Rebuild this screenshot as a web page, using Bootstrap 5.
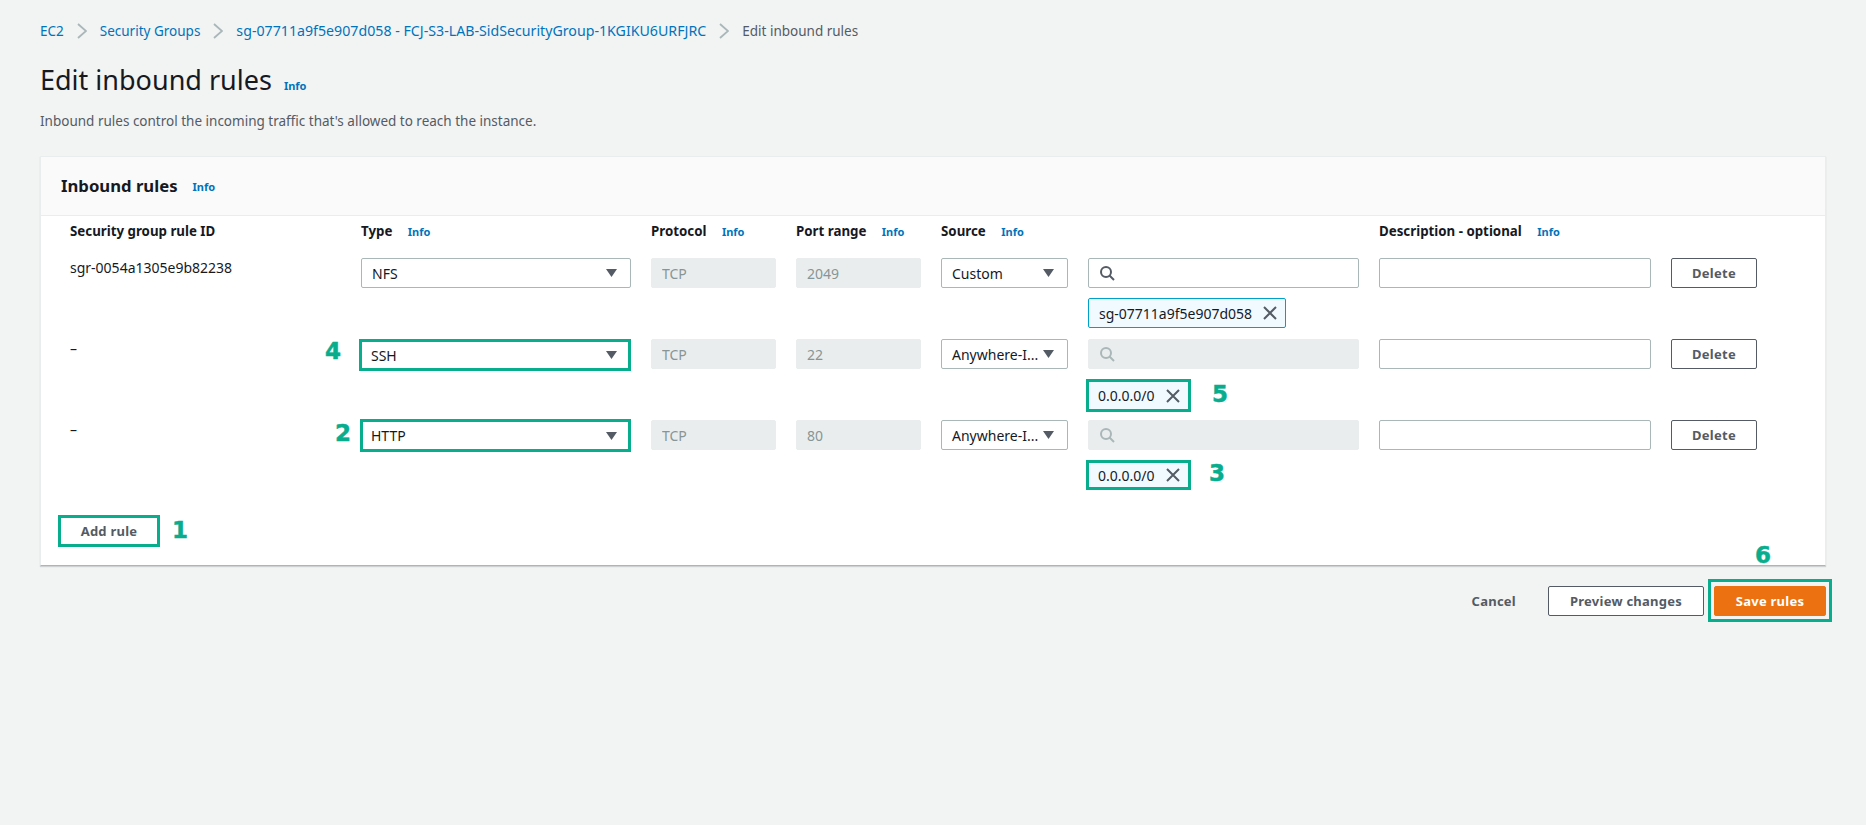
<!DOCTYPE html>
<html lang="en">
<head>
<meta charset="UTF-8">
<meta name="viewport" content="width=device-width, initial-scale=1.0">
<title>Edit inbound rules</title>
<link href="https://cdn.jsdelivr.net/npm/bootstrap@5.3.0/dist/css/bootstrap.min.css" rel="stylesheet">
<style>
  body {
    background-color: #f2f3f3;
    color: #16191f;
    font-family: "Noto Sans", "Liberation Sans", sans-serif;
    font-size: 13px;
    min-height: 825px;
    position: relative;
  }
  a { color: #0073bb; text-decoration: none; }
  .page-wrap { padding: 0 40px; }
  .crumbs { height: 41px; padding-top: 21px; gap: 13px; line-height: 20px; margin: 0 0 21px; color: #545b64; font-size: 13.5px; }
  .crumbs svg { color: #aab7b8; display: block; }
  .crumb-long { font-size: 14.2px; }
  .page-title { font-size: 27px; font-weight: 400; line-height: 36px; margin: 0; }
  .info-link { font-size: 11px; font-weight: 700; margin-left: 12px; }
  .page-desc { color: #545b64; font-size: 13.5px; margin: 13px 0 25px; line-height: 20px; }
  .rules-card { border: 0; border-radius: 0; border-left: 1px solid #eaeded; border-right: 1px solid #eaeded; border-top: 1px solid #eaeded; border-bottom: 1px solid #aab7b8; height: 410px; box-shadow: 0 1px 1px rgba(0,28,36,.15); }
  .rules-head { background: #fafafa; height: 59px; padding: 0 20px; border-bottom: 1px solid #eaeded; border-radius: 0 !important; }
  .rules-head h2 { font-size: 16.7px; font-weight: 700; margin: 0; padding-top: 1px; }
  .rules-head .info-link { margin-left: 15px; padding-top: 2px; }
  .rules-body { padding: 0; }
  .rule-grid {
    display: grid;
    grid-template-columns: 271px 270px 125px 125px 127px 271px 272px 86px;
    column-gap: 20px;
    row-gap: 10px;
    padding-left: 29px;
  }
  .col-label { font-weight: 700; font-size: 13.3px; height: 32px; line-height: 30px; white-space: nowrap; }
  .rule-cell { height: 30px; }
  .token-cell { height: 31px; grid-column: 6; }
  .id-text { grid-column: 1; font-size: 14px; line-height: 20px; }
  .aws-field.form-control {
    height: 30px; min-height: 0; border-radius: 2px; border-color: #aab7b8; font-size: 14px; padding: 0 10px; color: #16191f;
  }
  .aws-field.form-control:disabled { background: #eaeded; border-color: #eaeded; color: #879596; opacity: 1; }
  .select-box { white-space: nowrap; overflow: hidden; padding-right: 13px !important; }
  .select-box svg { flex: none; margin-left: auto; }
  .search-box svg { flex: none; color: #545b64; }
  .search-off { background: #eaeded !important; border-color: #eaeded !important; }
  .search-off svg { color: #aab7b8; }
  .rule-token {
    display: inline-flex; align-items: center; gap: 11px; height: 30px; padding: 0 8px 0 10px; font-size: 14px;
    background: #f1faff; border: 1px solid #00a1c9; border-radius: 2px; white-space: nowrap;
  }
  .rule-token svg { color: #545b64; }
  .aws-btn.btn {
    height: 30px; font-size: 13px; font-weight: 700; color: #545b64; background: #fff; border: 1px solid #545b64;
    border-radius: 2px; padding: 0 16px; letter-spacing: .25px; line-height: 27px;
  }
  .hl.hl { border: 3px solid #08ad8e !important; border-radius: 0 !important; }
  .hl-type { height: 32px !important; margin-left: -2px; width: calc(100% + 2px); padding-left: 9px !important; padding-right: 11px !important; }
  .hl-type2 { height: 33px !important; margin: -1px 0 0 -1px; width: calc(100% + 1px); padding-left: 8px !important; padding-right: 11px !important; }
  .hl-token { height: 33px; margin-left: -2px; padding: 0 8px 0 9px; }
  .hl-token2 { height: 30px; margin-left: -2px; padding: 0 8px 0 9px; }
  .add-wrap { margin: 24px 0 0 17px; }
  .add-btn.btn { height: 32px; width: 102px; padding: 0; }
  .foot-bar { height: 56px; padding-top: 20px; gap: 32px; margin-right: -6px; }
  .cancel-link { color: #545b64; font-weight: 700; letter-spacing: .25px; line-height: 30px; }
  .preview-btn.btn { width: 156px; padding: 0; margin-right: -28px; }
  .save-wrap { border: 3px solid #08ad8e; padding: 4px 3px 3px; height: 43px; margin-top: -7px; }
  .save-btn.btn { width: 112px; padding: 0; background: #ec7211; border-color: #ec7211; color: #fff; display: block; }
  .step-num {
    position: absolute; color: #08ad8e; font-family: "DejaVu Sans", sans-serif; font-weight: 700; font-size: 23px; line-height: 24px;
    -webkit-text-stroke: .5px #08ad8e;
  }
</style>
</head>
<body>
<div class="page-wrap">
  <ol class="crumbs list-unstyled d-flex align-items-center">
    <li><a href="#">EC2</a></li>
    <li><svg width="10" height="16" viewBox="0 0 10 16" fill="none" stroke="currentColor" stroke-width="1.8"><path d="M1 1l8 7-8 7"/></svg></li>
    <li><a href="#">Security Groups</a></li>
    <li><svg width="10" height="16" viewBox="0 0 10 16" fill="none" stroke="currentColor" stroke-width="1.8"><path d="M1 1l8 7-8 7"/></svg></li>
    <li><a href="#" class="crumb-long">sg-07711a9f5e907d058 - FCJ-S3-LAB-SidSecurityGroup-1KGIKU6URFJRC</a></li>
    <li><svg width="10" height="16" viewBox="0 0 10 16" fill="none" stroke="currentColor" stroke-width="1.8"><path d="M1 1l8 7-8 7"/></svg></li>
    <li>Edit inbound rules</li>
  </ol>

  <div class="d-flex align-items-baseline">
    <h1 class="page-title">Edit inbound rules</h1>
    <a href="#" class="info-link">Info</a>
  </div>
  <p class="page-desc">Inbound rules control the incoming traffic that's allowed to reach the instance.</p>

  <div class="card rules-card">
    <div class="card-header rules-head d-flex align-items-center">
      <h2>Inbound rules</h2>
      <a href="#" class="info-link">Info</a>
    </div>
    <div class="card-body rules-body">
      <div class="rule-grid" id="rule-grid">
        <div class="col-label">Security group rule ID</div>
        <div class="col-label">Type <a href="#" class="info-link">Info</a></div>
        <div class="col-label">Protocol <a href="#" class="info-link">Info</a></div>
        <div class="col-label">Port range <a href="#" class="info-link">Info</a></div>
        <div class="col-label">Source <a href="#" class="info-link">Info</a></div>
        <div class="col-label"></div>
        <div class="col-label">Description - optional <a href="#" class="info-link">Info</a></div>
        <div class="col-label"></div>

        <!-- row 1 -->
        <div class="rule-cell id-text">sgr-0054a1305e9b82238</div>
        <div class="rule-cell"><div class="form-control aws-field select-box d-flex align-items-center">NFS<svg width="11" height="8" viewBox="0 0 11 8" fill="#545b64"><path d="M0 0h11L5.500 8z"/></svg></div></div>
        <div class="rule-cell"><input class="form-control aws-field" value="TCP" disabled></div>
        <div class="rule-cell"><input class="form-control aws-field" value="2049" disabled></div>
        <div class="rule-cell"><div class="form-control aws-field select-box d-flex align-items-center">Custom<svg width="11" height="8" viewBox="0 0 11 8" fill="#545b64"><path d="M0 0h11L5.500 8z"/></svg></div></div>
        <div class="rule-cell"><div class="form-control aws-field search-box d-flex align-items-center"><svg width="16" height="16" viewBox="0 0 16 16" fill="none" stroke="currentColor" stroke-width="2"><circle cx="7" cy="7" r="5"/><path d="M10.500 10.500L15 15"/></svg></div></div>
        <div class="rule-cell"><input class="form-control aws-field"></div>
        <div class="rule-cell"><button class="btn aws-btn w-100 p-0">Delete</button></div>
        <div class="token-cell"><span class="rule-token">sg-07711a9f5e907d058<svg width="14" height="14" viewBox="0 0 14 14" fill="none" stroke="currentColor" stroke-width="2"><path d="M1 1l12 12M13 1L1 13"/></svg></span></div>

        <!-- row 2 -->
        <div class="rule-cell id-text">–</div>
        <div class="rule-cell"><div class="form-control aws-field select-box d-flex align-items-center hl hl-type">SSH<svg width="11" height="8" viewBox="0 0 11 8" fill="#545b64"><path d="M0 0h11L5.500 8z"/></svg></div></div>
        <div class="rule-cell"><input class="form-control aws-field" value="TCP" disabled></div>
        <div class="rule-cell"><input class="form-control aws-field" value="22" disabled></div>
        <div class="rule-cell"><div class="form-control aws-field select-box d-flex align-items-center">Anywhere-I...<svg width="11" height="8" viewBox="0 0 11 8" fill="#545b64"><path d="M0 0h11L5.500 8z"/></svg></div></div>
        <div class="rule-cell"><div class="form-control aws-field search-box search-off d-flex align-items-center"><svg width="16" height="16" viewBox="0 0 16 16" fill="none" stroke="currentColor" stroke-width="2"><circle cx="7" cy="7" r="5"/><path d="M10.500 10.500L15 15"/></svg></div></div>
        <div class="rule-cell"><input class="form-control aws-field"></div>
        <div class="rule-cell"><button class="btn aws-btn w-100 p-0">Delete</button></div>
        <div class="token-cell"><span class="rule-token hl hl-token">0.0.0.0/0<svg width="14" height="14" viewBox="0 0 14 14" fill="none" stroke="currentColor" stroke-width="2"><path d="M1 1l12 12M13 1L1 13"/></svg></span></div>

        <!-- row 3 -->
        <div class="rule-cell id-text">–</div>
        <div class="rule-cell"><div class="form-control aws-field select-box d-flex align-items-center hl hl-type2">HTTP<svg width="11" height="8" viewBox="0 0 11 8" fill="#545b64"><path d="M0 0h11L5.500 8z"/></svg></div></div>
        <div class="rule-cell"><input class="form-control aws-field" value="TCP" disabled></div>
        <div class="rule-cell"><input class="form-control aws-field" value="80" disabled></div>
        <div class="rule-cell"><div class="form-control aws-field select-box d-flex align-items-center">Anywhere-I...<svg width="11" height="8" viewBox="0 0 11 8" fill="#545b64"><path d="M0 0h11L5.500 8z"/></svg></div></div>
        <div class="rule-cell"><div class="form-control aws-field search-box search-off d-flex align-items-center"><svg width="16" height="16" viewBox="0 0 16 16" fill="none" stroke="currentColor" stroke-width="2"><circle cx="7" cy="7" r="5"/><path d="M10.500 10.500L15 15"/></svg></div></div>
        <div class="rule-cell"><input class="form-control aws-field"></div>
        <div class="rule-cell"><button class="btn aws-btn w-100 p-0">Delete</button></div>
        <div class="token-cell"><span class="rule-token hl hl-token2">0.0.0.0/0<svg width="14" height="14" viewBox="0 0 14 14" fill="none" stroke="currentColor" stroke-width="2"><path d="M1 1l12 12M13 1L1 13"/></svg></span></div>
      </div>
      <div class="add-wrap"><button class="btn aws-btn add-btn hl">Add rule</button></div>
    </div>
  </div>

  <div class="foot-bar d-flex justify-content-end align-items-start">
    <a href="#" class="cancel-link">Cancel</a>
    <button class="btn aws-btn preview-btn">Preview changes</button>
    <div class="save-wrap"><button class="btn aws-btn save-btn">Save rules</button></div>
  </div>
</div>

<!-- step numbers drawn over the page -->
<span class="step-num" style="left:325px;top:339px">4</span>
<span class="step-num" style="left:335px;top:421px">2</span>
<span class="step-num" style="left:172px;top:518px">1</span>
<span class="step-num" style="left:1212px;top:382px">5</span>
<span class="step-num" style="left:1209px;top:461px">3</span>
<span class="step-num" style="left:1755px;top:543px">6</span>
<script src="https://cdn.jsdelivr.net/npm/bootstrap@5.3.0/dist/js/bootstrap.bundle.min.js"></script>
</body>
</html>
